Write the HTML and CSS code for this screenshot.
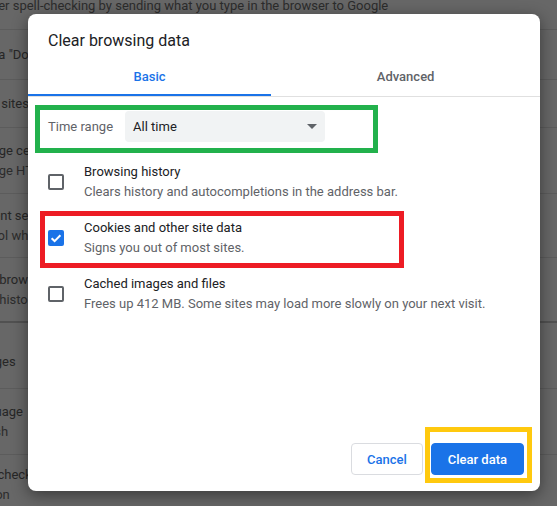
FILE: index.html
```html
<!DOCTYPE html>
<html lang="en">
<head>
<meta charset="utf-8">
<title>Clear browsing data</title>
<link rel="stylesheet" href="styles.css">
</head>
<body>
<div class="bg">
  <div class="bg-row r0"><div class="sub">Smarter spell-checking by sending what you type in the browser to Google</div></div>
  <div class="bg-row r1"><div>Send a "Do Not Track" request with your browsing traffic</div></div>
  <div class="bg-row r2"><div>Allow sites to check if you have payment methods saved</div></div>
  <div class="bg-row r3"><div>Manage certificates</div><div class="sub">Manage HTTPS/SSL certificates and settings</div></div>
  <div class="bg-row r4"><div>Content settings</div><div class="sub">Control what information websites can use and what content they can show you</div></div>
  <div class="bg-row r5"><div>Clear browsing data</div><div class="sub">Clear history, cookies, cache, and more</div></div>
  <div class="bg-row r6"><div class="heading">Languages</div></div>
  <div class="bg-row r7"><div>Language</div><div class="sub">English</div></div>
  <div class="bg-row r8"><div>Spell check</div><div class="sub">Turn on</div></div>
</div>

<div class="dialog">
  <div class="title">Clear browsing data</div>
  <div class="tabs">
    <div class="tab active">Basic</div>
    <div class="tab">Advanced</div>
  </div>
  <div class="content">
    <div class="range">
      <span class="range-label">Time range</span>
      <div class="select">
        <span>All time</span>
        <svg class="arrow" width="10" height="5" viewBox="0 0 10 5"><polygon points="0,0 10,0 5,5" fill="#5f6368"/></svg>
      </div>
    </div>
    <div class="row">
      <span class="checkbox"></span>
      <div class="row-text">
        <div class="row-title">Browsing history</div>
        <div class="row-sub">Clears history and autocompletions in the address bar.</div>
      </div>
    </div>
    <div class="row">
      <span class="checkbox checked">
        <svg width="16" height="16" viewBox="0 0 16 16"><path d="M3.6 8.3 L6.6 11.1 L12.4 5.2" fill="none" stroke="#fff" stroke-width="2"/></svg>
      </span>
      <div class="row-text">
        <div class="row-title">Cookies and other site data</div>
        <div class="row-sub">Signs you out of most sites.</div>
      </div>
    </div>
    <div class="row">
      <span class="checkbox"></span>
      <div class="row-text">
        <div class="row-title">Cached images and files</div>
        <div class="row-sub">Frees up 412 MB. Some sites may load more slowly on your next visit.</div>
      </div>
    </div>
  </div>
  <div class="footer">
    <button class="btn">Cancel</button>
    <button class="btn primary">Clear data</button>
  </div>
</div>

<div class="mark mark-green"></div>
<div class="mark mark-red"></div>
<div class="mark mark-yellow"></div>
</body>
</html>
```
FILE: styles.css
```css
* { box-sizing: border-box; }
html, body { margin: 0; padding: 0; }
body {
  width: 557px;
  height: 506px;
  overflow: hidden;
  position: relative;
  background: #676767;
  font-family: Roboto, "Liberation Sans", Arial, sans-serif;
}

/* dimmed settings page behind the dialog */
.bg {
  margin-left: -34px;
  width: 640px;
  font-size: 13px;
  line-height: 20px;
  color: #262626;
}
.bg-row {
  display: flex;
  flex-direction: column;
  justify-content: center;
  border-bottom: 1px solid #5c5c5c;
  white-space: nowrap;
}
.bg-row .sub { color: #2c2c2c; }
.r0 { height: 34px; margin-top: -4px; justify-content: flex-start; }
.r0 .sub { margin-left: -3px; }
.r1 { height: 50px; }
.r2 { height: 48px; }
.r3 { height: 66px; }
.r4 { height: 64px; }
.r5 { height: 65px; border-bottom: 2px solid #515151; }
.r6 { height: 66px; justify-content: flex-end; padding-bottom: 16px; }
.r6 .heading { margin-left: -14px; }
.r7 { height: 66px; }
.r8 { height: 60px; }

/* dialog */
.dialog {
  position: absolute;
  left: 28px;
  top: 14px;
  width: 512px;
  height: 477px;
  background: #fff;
  border-radius: 8px;
  box-shadow: 0 4px 16px rgba(0, 0, 0, 0.45);
  display: flex;
  flex-direction: column;
  color: #202124;
  font-size: 13px;
  line-height: 20px;
}
.title {
  padding: 17px 20px 0;
  font-size: 16px;
  line-height: 20px;
  color: #202124;
}
.tabs {
  display: flex;
  border-bottom: 1px solid #e0e0e0;
}
.tab {
  flex: 1 1 auto;
  text-align: center;
  padding: 16px 0 7px;
  font-weight: 500;
  color: #5f6368;
  border-bottom: 2px solid transparent;
}
.tab.active {
  color: #1a73e8;
  border-bottom-color: #1a73e8;
}
.content {
  flex: 1;
  padding: 14px 20px 0;
}
.range {
  display: flex;
  align-items: center;
  height: 31px;
}
.range-label {
  color: #5f6368;
  margin-right: 12px;
}
.select {
  width: 200px;
  height: 31px;
  background: #f1f3f4;
  border-radius: 4px;
  display: flex;
  align-items: center;
  justify-content: space-between;
  padding: 0 8px;
  color: #202124;
}
.arrow { display: block; }
.row {
  display: flex;
  align-items: center;
  gap: 20px;
  padding: 8px 0;
}
.range + .row { margin-top: 12px; }
.checkbox {
  width: 16px;
  height: 16px;
  flex: none;
  border: 2px solid #5f6368;
  border-radius: 2px;
  position: relative;
}
.checkbox.checked {
  border: none;
  background: #1a73e8;
}
.checkbox svg { display: block; }
.row-title { color: #202124; }
.row-sub { color: #5f6368; }

.footer {
  display: flex;
  justify-content: flex-end;
  gap: 8px;
  padding: 0 16px 16px;
}
.btn {
  height: 32px;
  padding: 0 15px;
  border-radius: 4px;
  border: 1px solid #dadce0;
  background: #fff;
  color: #1a73e8;
  font-family: Roboto, "Liberation Sans", Arial, sans-serif;
  font-size: 13px;
  font-weight: 500;
}
.btn.primary {
  background: #1a73e8;
  border-color: #1a73e8;
  color: #fff;
  padding: 0 16px;
}

/* annotation rectangles drawn over the screenshot */
.mark {
  position: absolute;
  border: 5px solid;
}
.mark-green { left: 35px; top: 105px; width: 343px; height: 48px; border-color: #22b14c; }
.mark-red { left: 40px; top: 211px; width: 364px; height: 57px; border-color: #ed1c24; }
.mark-yellow { left: 425px; top: 427px; width: 107px; height: 56px; border-color: #ffc90e; }
```
